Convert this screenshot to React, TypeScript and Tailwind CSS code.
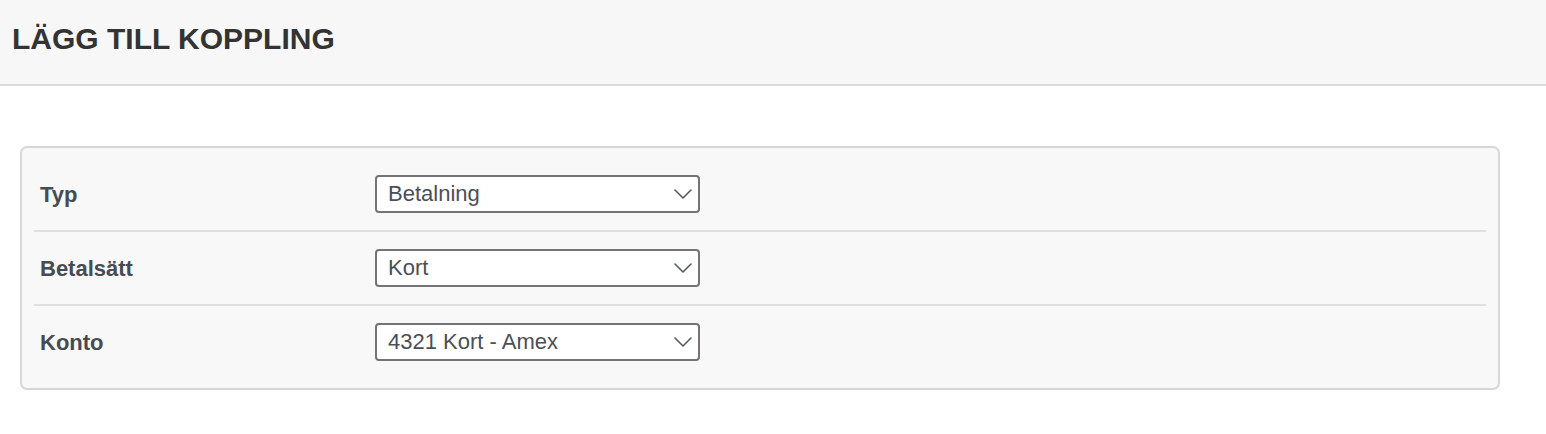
import React from "react";

const rows = [
  { label: "Typ", value: "Betalning" },
  { label: "Betalsätt", value: "Kort" },
  { label: "Konto", value: "4321 Kort - Amex" },
];

function Chevron() {
  return (
    <svg width="18" height="10" viewBox="0 0 18 10" fill="none" className="shrink-0">
      <path d="M1 1 L9 9 L17 1" stroke="#555a60" strokeWidth="1.6" strokeLinecap="round" strokeLinejoin="round" />
    </svg>
  );
}

export default function App() {
  return (
    <div className="min-h-screen bg-white font-['Liberation_Sans',Arial,sans-serif]">
      <div className="h-[86px] bg-[#f7f7f7] border-b-2 border-[#dcdcdc] pt-[21px] pl-[12px]">
        <h1 className="text-[30px] leading-[36px] font-bold text-[#333333]">LÄGG TILL KOPPLING</h1>
      </div>
      <div className="mt-[60px] ml-[20px] w-[1480px] border-2 border-[#d7d7d7] rounded-[7px] bg-[#f8f8f8] px-[12px] py-[10px]">
        {rows.map((r, i) => (
          <div
            key={r.label}
            className={`flex items-center py-[17px] ${i > 0 ? "border-t-2 border-[#e0e0e0]" : ""}`}
          >
            <div className="w-[341px] pl-[6px] text-[22px] font-bold text-[#464b53]">{r.label}</div>
            <div className="w-[325px] h-[38px] border-2 border-[#747474] rounded-[4px] bg-white flex items-center justify-between pl-[11px] pr-[6px]">
              <span className="text-[22px] text-[#4a4f57] leading-none">{r.value}</span>
              <Chevron />
            </div>
          </div>
        ))}
      </div>
    </div>
  );
}
